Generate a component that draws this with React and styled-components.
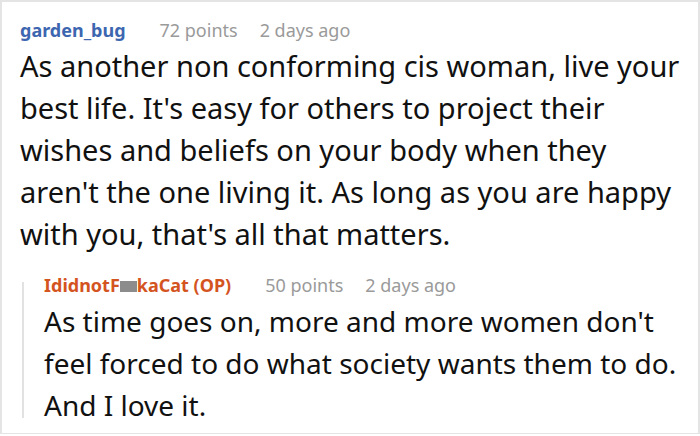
import React from 'react';
import styled, { createGlobalStyle } from 'styled-components';

const GlobalStyle = createGlobalStyle`
  html, body {
    margin: 0;
    padding: 0;
    background: #fff;
  }
  body {
    font-family: "Noto Sans", "Open Sans", sans-serif;
  }
`;

const Frame = styled.div`
  width: 700px;
  height: 434px;
  box-sizing: border-box;
  border: 2px solid #e4e4e4;
  border-bottom-width: 1px;
  padding: 16px 10px 0 18px;
  overflow: hidden;
`;

const Comment = styled.div`
  display: flex;
  flex-direction: column;
`;

const Meta = styled.div`
  display: flex;
  align-items: baseline;
  font-size: 18px;
  line-height: 24px;
  color: #9a9a9a;
  span + span {
    margin-left: 22px;
  }
`;

const Author = styled.span`
  font-weight: 700;
  color: ${p => (p.op ? '#d4541f' : '#3d66b0')};
  margin-right: 12px;
`;

const Censor = styled.span`
  display: inline-block;
  width: 17px;
  height: 11px;
  background: #8c8c8c;
  vertical-align: baseline;
`;

const Body = styled.p`
  margin: 3px 0 0 0;
  font-size: ${p => p.size || 29}px;
  line-height: 42px;
  color: #111;
  white-space: nowrap;
`;

const Reply = styled.div`
  position: relative;
  margin-top: 18px;
  margin-left: 2px;
  padding-left: 22px;
  display: flex;
  flex-direction: column;

  &::before {
    content: "";
    position: absolute;
    left: 0;
    top: 9px;
    bottom: 8px;
    width: 2px;
    background: #e2e2e2;
  }
`;

export default function App() {
  return (
    <>
      <GlobalStyle />
      <Frame>
        <Comment>
          <Meta>
            <Author>garden_bug</Author>
            <span>72 points</span>
            <span>2 days ago</span>
          </Meta>
          <Body>
            As another non conforming cis woman, live your<br />
            best life. It's easy for others to project their<br />
            wishes and beliefs on your body when they<br />
            aren't the one living it. As long as you are happy<br />
            with you, that's all that matters.
          </Body>
        </Comment>
        <Reply>
          <Meta>
            <Author op>
              IdidnotF<Censor />kaCat (OP)
            </Author>
            <span>50 points</span>
            <span>2 days ago</span>
          </Meta>
          <Body size={28}>
            As time goes on, more and more women don't<br />
            feel forced to do what society wants them to do.<br />
            And I love it.
          </Body>
        </Reply>
      </Frame>
    </>
  );
}
